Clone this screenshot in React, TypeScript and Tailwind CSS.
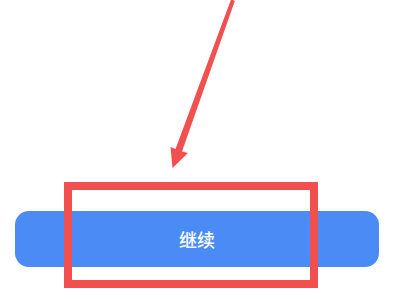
const App = () => {
  return (
    <div className="relative h-[300px] w-[400px] overflow-hidden bg-white font-['Noto_Sans_CJK_SC',sans-serif]">
      <div className="pt-[211px] pl-[15px]">
        <button className="flex h-[56px] w-[364px] items-center justify-center rounded-[14px] bg-[#4b8bf6] text-[18px] font-medium text-white">
          继续
        </button>
      </div>

      {/* red annotation box */}
      <div className="absolute left-[64px] top-[182px] h-[106px] w-[254px] border-[8px] border-[#f24f4f]" />

      {/* red annotation arrow */}
      <svg className="absolute inset-0" width="400" height="300" viewBox="0 0 400 300">
        <polygon
          points="231.2,-1 234.8,1 182,151.5 188,153 172.5,168 170.5,147 175.5,149"
          fill="#f24f4f"
        />
      </svg>
    </div>
  );
};

export default App;
